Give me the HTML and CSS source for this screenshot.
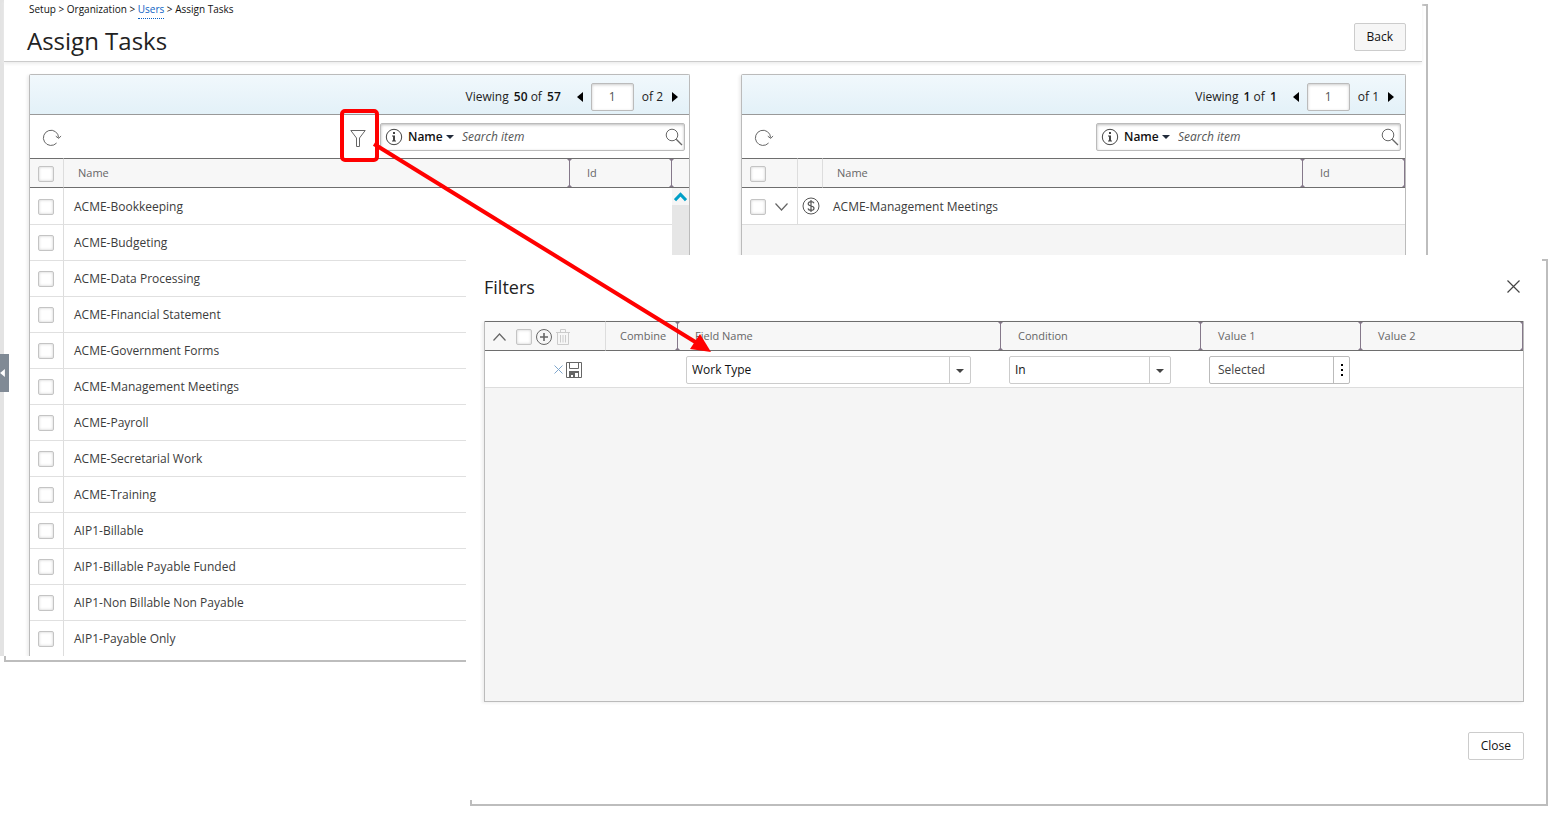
FILE: index.html
```
<!DOCTYPE html>
<html lang="en">
<head>
    <meta charset="UTF-8">
    <meta name="viewport" content="width=device-width, initial-scale=1.0">
    <title>Assign Tasks</title>
    <link rel="stylesheet" href="styles.css">
</head>
<body>
    <!-- Shared icons -->
    <svg class="sprite" aria-hidden="true">
        <symbol id="refresh" viewBox="0 0 20 18">
            <path d="M14.6 14A7.6 7.6 0 1 1 16.6 8.6M13.8 7.2l2.9 2.2 2.4-2.4" fill="none" stroke="currentColor"/>
        </symbol>
        <symbol id="info" viewBox="0 0 18 18">
            <circle cx="9" cy="9" r="7.7" fill="none" stroke="currentColor"/>
            <path d="M8 4h2v2H8zM7 7.5h3v5h1v1H7v-1h1v-4H7z" fill="currentColor"/>
        </symbol>
        <symbol id="search" viewBox="0 0 18 18">
            <circle cx="7" cy="7" r="5.8" fill="none" stroke="currentColor"/>
            <path d="M11.2 11.2L17 17" stroke="currentColor" stroke-width="1.3"/>
        </symbol>
        <symbol id="caret" viewBox="0 0 8 4">
            <path d="M0 0h8L4 4z" fill="currentColor"/>
        </symbol>
        <symbol id="prev" viewBox="0 0 6 10">
            <path d="M6 0v10L0 5z" fill="currentColor"/>
        </symbol>
        <symbol id="next" viewBox="0 0 6 10">
            <path d="M0 0v10l6-5z" fill="currentColor"/>
        </symbol>
    </svg>

    <div class="page">
        <main class="window assign">
            <button class="side-handle" aria-label="Expand menu"><svg width="5" height="8"><use href="#prev"/></svg></button>
            <header class="top">
                <div>
                    <nav class="breadcrumb">Setup &gt; Organization &gt; <a href="#">Users</a> &gt; Assign Tasks</nav>
                    <h1>Assign Tasks</h1>
                </div>
                <button class="btn btn-back">Back</button>
            </header>

            <div class="panels">
                <section class="panel">
                    <div class="pager">
                        <span>Viewing <b>50</b> of <b>57</b></span>
                        <button class="icon-btn prev" aria-label="Previous page"><svg width="6" height="10"><use href="#prev"/></svg></button>
                        <input type="text" class="page-no" value="1" aria-label="Page">
                        <span>of 2</span>
                        <button class="icon-btn next" aria-label="Next page"><svg width="6" height="10"><use href="#next"/></svg></button>
                    </div>
                    <div class="toolbar">
                        <button class="icon-btn refresh" aria-label="Refresh"><svg width="20" height="18"><use href="#refresh"/></svg></button>
                        <button class="icon-btn filter" aria-label="Filters">
                            <svg width="16" height="17" viewBox="0 0 16 17"><path d="M.8.5h14.4L9.5 8v8.5h-3V8z" fill="none" stroke="currentColor"/></svg>
                        </button>
                        <div class="search">
                            <svg width="18" height="18"><use href="#info"/></svg>
                            <select aria-label="Search by"><option>Name</option></select>
                            <svg class="caret" width="8" height="4"><use href="#caret"/></svg>
                            <input type="text" placeholder="Search item" aria-label="Search item">
                            <button class="icon-btn" aria-label="Search"><svg width="18" height="18"><use href="#search"/></svg></button>
                        </div>
                    </div>
                    <table class="grid">
                        <colgroup><col class="col-check"><col><col class="col-id"><col class="col-scroll"></colgroup>
                        <thead>
                            <tr>
                                <th class="line check"><input type="checkbox" aria-label="Select all"></th>
                                <th class="sep">Name</th>
                                <th class="sep id">Id</th>
                                <th></th>
                            </tr>
                        </thead>
                        <tbody>
                            <tr>
                                <td class="line check"><input type="checkbox" id="t1"></td>
                                <td colspan="2"><label for="t1">ACME-Bookkeeping</label></td>
                                <td class="scroll" rowspan="13">
                                    <button class="scroll-up" aria-label="Scroll up"><svg width="13" height="10" viewBox="0 0 13 10"><path d="M1 8.2L6.5 2.5 12 8.2" fill="none" stroke="#009fc7" stroke-width="3"/></svg></button>
                                </td>
                            </tr>
                            <tr><td class="line check"><input type="checkbox" id="t2"></td><td colspan="2"><label for="t2">ACME-Budgeting</label></td></tr>
                            <tr><td class="line check"><input type="checkbox" id="t3"></td><td colspan="2"><label for="t3">ACME-Data Processing</label></td></tr>
                            <tr><td class="line check"><input type="checkbox" id="t4"></td><td colspan="2"><label for="t4">ACME-Financial Statement</label></td></tr>
                            <tr><td class="line check"><input type="checkbox" id="t5"></td><td colspan="2"><label for="t5">ACME-Government Forms</label></td></tr>
                            <tr><td class="line check"><input type="checkbox" id="t6"></td><td colspan="2"><label for="t6">ACME-Management Meetings</label></td></tr>
                            <tr><td class="line check"><input type="checkbox" id="t7"></td><td colspan="2"><label for="t7">ACME-Payroll</label></td></tr>
                            <tr><td class="line check"><input type="checkbox" id="t8"></td><td colspan="2"><label for="t8">ACME-Secretarial Work</label></td></tr>
                            <tr><td class="line check"><input type="checkbox" id="t9"></td><td colspan="2"><label for="t9">ACME-Training</label></td></tr>
                            <tr><td class="line check"><input type="checkbox" id="t10"></td><td colspan="2"><label for="t10">AIP1-Billable</label></td></tr>
                            <tr><td class="line check"><input type="checkbox" id="t11"></td><td colspan="2"><label for="t11">AIP1-Billable Payable Funded</label></td></tr>
                            <tr><td class="line check"><input type="checkbox" id="t12"></td><td colspan="2"><label for="t12">AIP1-Non Billable Non Payable</label></td></tr>
                            <tr><td class="line check"><input type="checkbox" id="t13"></td><td colspan="2"><label for="t13">AIP1-Payable Only</label></td></tr>
                        </tbody>
                    </table>
                </section>

                <section class="panel">
                    <div class="pager">
                        <span>Viewing <b>1</b> of <b>1</b></span>
                        <button class="icon-btn prev" aria-label="Previous page"><svg width="6" height="10"><use href="#prev"/></svg></button>
                        <input type="text" class="page-no" value="1" aria-label="Page">
                        <span>of 1</span>
                        <button class="icon-btn next" aria-label="Next page"><svg width="6" height="10"><use href="#next"/></svg></button>
                    </div>
                    <div class="toolbar">
                        <button class="icon-btn refresh" aria-label="Refresh"><svg width="20" height="18"><use href="#refresh"/></svg></button>
                        <div class="search">
                            <svg width="18" height="18"><use href="#info"/></svg>
                            <select aria-label="Search by"><option>Name</option></select>
                            <svg class="caret" width="8" height="4"><use href="#caret"/></svg>
                            <input type="text" placeholder="Search item" aria-label="Search item">
                            <button class="icon-btn" aria-label="Search"><svg width="18" height="18"><use href="#search"/></svg></button>
                        </div>
                    </div>
                    <table class="grid">
                        <colgroup><col class="col-toggle"><col class="col-type"><col><col class="col-id"></colgroup>
                        <thead>
                            <tr>
                                <th class="line check"><input type="checkbox" aria-label="Select all"></th>
                                <th class="line"></th>
                                <th class="sep">Name</th>
                                <th class="sep id">Id</th>
                            </tr>
                        </thead>
                        <tbody>
                            <tr>
                                <td class="line check">
                                    <div class="tools">
                                        <input type="checkbox" id="a1">
                                        <button class="icon-btn" aria-label="Expand"><svg width="13" height="8" viewBox="0 0 13 8"><path d="M.5.5l6 6.500 6-6.500" fill="none" stroke="currentColor" stroke-width="1.2"/></svg></button>
                                    </div>
                                </td>
                                <td class="type">
                                    <svg width="18" height="18" viewBox="0 0 18 18" fill="none" stroke="currentColor">
                                        <circle cx="9" cy="9" r="8"/>
                                        <path d="M9 3v12M12 6.2C11.500 5 10.500 4.700 9 4.700 7.300 4.700 6.200 5.500 6.200 6.800 6.200 10 12 8 12 11.200 12 12.600 10.800 13.300 9 13.300 7.300 13.300 6.300 12.700 6 11.500" stroke-width="1.2"/>
                                    </svg>
                                </td>
                                <td colspan="2"><label for="a1">ACME-Management Meetings</label></td>
                            </tr>
                        </tbody>
                    </table>
                    <div class="empty"></div>
                </section>
            </div>
        </main>

        <div class="window dialog" role="dialog" aria-labelledby="filters-title">
            <div class="dialog-head">
                <h2 id="filters-title">Filters</h2>
                <button class="icon-btn" aria-label="Close filters"><svg width="13" height="13" viewBox="0 0 13 13"><path d="M.5.5l12 12M12.500.5l-12 12" stroke="#444" stroke-width="1.2"/></svg></button>
            </div>
            <div class="panel filters">
                <table class="grid">
                    <colgroup><col class="col-tools"><col class="col-combine"><col><col class="col-condition"><col class="col-value1"><col class="col-value2"></colgroup>
                    <thead>
                        <tr>
                            <th class="line check">
                                <div class="tools head-tools">
                                    <button class="icon-btn fold" aria-label="Collapse"><svg width="13" height="8" viewBox="0 0 13 8"><path d="M.5 7.500l6-6.500 6 6.500" fill="none" stroke="currentColor" stroke-width="1.2"/></svg></button>
                                    <input type="checkbox" aria-label="Select all filters">
                                    <button class="icon-btn" aria-label="Add filter"><svg width="16" height="16" viewBox="0 0 16 16"><circle cx="8" cy="8" r="7.500" fill="none" stroke="currentColor"/><path d="M4 8h8M8 4v8" stroke="currentColor" stroke-width="1.600"/></svg></button>
                                    <button class="icon-btn trash" aria-label="Delete filter"><svg width="14" height="16" viewBox="0 0 14 16" fill="none" stroke="currentColor"><path d="M0 3.500h14M4.500 3.500v-3h5v3M1.500 3.500v12h11v-12M4.500 6v7.500M7 6v7.500M9.500 6v7.500"/></svg></button>
                                </div>
                            </th>
                            <th class="sep">Combine</th>
                            <th class="sep id">Field Name</th>
                            <th class="sep id">Condition</th>
                            <th class="sep id">Value 1</th>
                            <th class="sep id">Value 2</th>
                        </tr>
                    </thead>
                    <tbody>
                        <tr>
                            <td class="check">
                                <div class="tools row-tools">
                                    <button class="icon-btn cancel" aria-label="Cancel"><svg width="9" height="9" viewBox="0 0 9 9"><path d="M.5.5l8 8M8.500.5l-8 8" stroke="currentColor"/></svg></button>
                                    <button class="icon-btn" aria-label="Save"><svg width="16" height="16" viewBox="0 0 16 16"><path d="M.5.5h15v15H.5zM3.500.5v6h9v-6M3.500 15.500v-6h9v6" fill="none" stroke="currentColor"/><path d="M3 9h10v2H9v5H7v-3H5v3H3z" fill="currentColor"/></svg></button>
                                </div>
                            </td>
                            <td></td>
                            <td class="field"><div class="combo"><select aria-label="Field Name"><option>Work Type</option></select><svg width="8" height="4"><use href="#caret"/></svg></div></td>
                            <td class="field"><div class="combo"><select aria-label="Condition"><option>In</option></select><svg width="8" height="4"><use href="#caret"/></svg></div></td>
                            <td class="field value">
                                <div class="picker">
                                    <input type="text" value="Selected" aria-label="Value 1">
                                    <button aria-label="Choose values"><svg width="2" height="12" viewBox="0 0 2 12"><path d="M0 0h2v2H0zM0 5h2v2H0zM0 10h2v2H0z"/></svg></button>
                                </div>
                            </td>
                            <td></td>
                        </tr>
                    </tbody>
                </table>
                <div class="empty"></div>
            </div>
            <div class="dialog-foot">
                <button class="btn">Close</button>
            </div>
        </div>

        <!-- Callout from the filter button to the dialog -->
        <svg class="callout" width="720" height="360" fill="none" stroke="#f00" aria-hidden="true">
            <rect x="342" y="111" width="35" height="49" rx="3" stroke-width="4"/>
            <path d="M374 144L697 343" stroke-width="4"/>
            <path d="M711 352l-21-3 10-15z" fill="#f00" stroke="none"/>
        </svg>
    </div>
</body>
</html>
```
FILE: styles.css
```
* {
    box-sizing: border-box;
}
body {
    margin: 0;
    background: #fff;
    color: #222;
    font-family: "Open Sans", sans-serif;
    font-size: 12px;
    line-height: 16px;
}
input, select, button {
    font: inherit;
    color: inherit;
    margin: 0;
}
svg {
    display: block;
    flex: none;
}
h1, h2 {
    margin: 0;
    font-weight: 400;
}
.sprite {
    position: absolute;
    width: 0;
    height: 0;
}
.page {
    position: relative;
    min-height: 100vh;
}

/* Windows with an offset frame behind them */
.window {
    position: relative;
    z-index: 0;
}
.window::before {
    content: "";
    position: absolute;
    z-index: -2;
    inset: 4px -6px -6px 4px;
    border: 2px solid #bdbdbd;
}
.window::after {
    content: "";
    position: absolute;
    z-index: -1;
    inset: 0;
    background: #fff;
}
.assign {
    margin-right: 137px;
    border-left: 4px solid #e3e3e3;
}
.assign::before {
    left: 0;
}
.side-handle {
    position: absolute;
    left: -4px;
    top: 354px;
    width: 9px;
    height: 38px;
    padding: 0;
    border: 0;
    background: #808a95;
    color: #fff;
}
.top {
    display: flex;
    justify-content: space-between;
    align-items: flex-start;
    height: 62px;
    padding: 1px 16px 0 23px;
    border-bottom: 1px solid #ccc;
    box-shadow: 0 2px 3px #eee;
}
.breadcrumb {
    padding-left: 2px;
    font-size: 10px;
    color: #111;
}
.breadcrumb a {
    display: inline-block;
    color: #0b62c4;
    text-decoration: none;
    border-bottom: 1px dotted #0b62c4;
    height: 18px;
}
h1 {
    font-size: 24px;
    line-height: 44px;
}
.btn {
    height: 28px;
    padding: 0 12px;
    border: 1px solid #ccc;
    border-radius: 2px;
    background: #fff;
    color: #111;
}
.btn-back {
    margin-top: 22px;
    background: #f6f6f6;
}
.icon-btn {
    display: flex;
    padding: 0;
    border: 0;
    background: none;
    color: #666;
}

/* Panels */
.panels {
    display: grid;
    grid-template-columns: 661fr 665fr;
    gap: 51px;
    padding: 12px 16px 0 25px;
    overflow: hidden;
}
.panel {
    display: flex;
    flex-direction: column;
    min-width: 0;
    border: 1px solid #bbb;
    border-bottom: 0;
    border-radius: 2px 2px 0 0;
    box-shadow: -2px 1px 3px #eee;
}
.pager {
    display: flex;
    align-items: center;
    justify-content: flex-end;
    height: 40px;
    padding: 4px 11px 0 0;
    border-bottom: 1px solid #999;
    background: linear-gradient(#f1f8fc, #e3f1f8);
}
.pager b {
    margin-left: 2px;
    font-weight: 600;
    color: #111;
}
.pager .icon-btn {
    color: #000;
}
.prev {
    margin: 0 8px 0 16px;
}
.next {
    margin-left: 9px;
}
.page-no {
    width: 43px;
    height: 28px;
    margin-right: 8px;
    padding: 0;
    border: 1px solid #bbb;
    border-radius: 2px;
    box-shadow: inset 0 1px 3px #ccc;
    text-align: center;
    color: #555;
}
.toolbar {
    display: flex;
    align-items: center;
    height: 43px;
    padding-right: 4px;
}
.refresh {
    margin: 3px auto 0 12px;
}
.filter {
    margin: 3px 14px 0 0;
}
.search {
    display: flex;
    align-items: center;
    width: 305px;
    height: 28px;
    padding: 0 1px 0 4px;
    border: 1px solid #bbb;
    border-radius: 2px;
    box-shadow: inset 0 1px 3px #bbb;
    color: #444;
}
.search select {
    appearance: none;
    width: 35px;
    margin-left: 5px;
    padding: 0;
    border: 0;
    background: none;
    font-weight: 600;
    color: #111;
}
.caret {
    margin: 0 8px 0 3px;
    color: #222b3a;
}
.search input {
    flex: 1;
    min-width: 0;
    padding: 0;
    border: 0;
    background: none;
}
.search input::placeholder {
    color: #555;
    font-style: italic;
}

/* Grids */
.grid {
    width: 100%;
    table-layout: fixed;
    border-spacing: 0;
    color: #3c3c3c;
}
.col-check { width: 34px; }
.col-id { width: 102px; }
.col-scroll { width: 17px; }
.col-toggle { width: 56px; }
.col-type { width: 25px; }
.col-tools { width: 121px; }
.col-combine { width: 72px; }
.col-condition { width: 200px; }
.col-value1 { width: 160px; }
.col-value2 { width: 162px; }

th {
    position: relative;
    height: 30px;
    padding: 0 0 0 14px;
    border-top: 1px solid #6e6e6e;
    border-bottom: 1px solid #6e6e6e;
    background: #f7f7f7;
    color: #666;
    font-size: 11px;
    font-weight: 400;
    text-align: left;
}
th.id {
    padding-left: 17px;
}
td {
    height: 36px;
    padding: 1px 0 0 10px;
}
tr + tr td {
    border-top: 1px solid #e0e0e0;
}
.line {
    border-right: 1px solid #ddd;
}
/* column resize marker */
.sep::after {
    content: "";
    position: absolute;
    z-index: 1;
    right: -2px;
    top: 0;
    width: 5px;
    height: 100%;
    background: #85788a;
    clip-path: polygon(0 0, 100% 0, 3px 2px, 3px calc(100% - 2px), 100% 100%, 0 100%, 2px calc(100% - 2px), 2px 2px);
}
.sep:last-child::after {
    right: 0;
    width: 3px;
    clip-path: polygon(0 0, 100% 0, 100% 100%, 0 100%, 2px calc(100% - 2px), 2px 2px);
}
th.check, td.check {
    padding: 1px 0 0 8px;
}
input[type="checkbox"] {
    appearance: none;
    display: block;
    width: 16px;
    height: 16px;
    border: 1px solid #c4c4c4;
    border-radius: 2px;
    background: #fff;
    box-shadow: inset 0 0 3px #ccc;
}
.tools {
    display: flex;
    align-items: center;
    gap: 9px;
}
.head-tools {
    gap: 4px;
}
.fold {
    margin-right: 6px;
}
.trash {
    color: #ccc;
}
.row-tools {
    justify-content: flex-end;
    gap: 3px;
    padding-right: 24px;
}
.cancel {
    color: #7fa6cc;
}
td.type {
    padding: 0 0 0 4px;
    color: #555;
}
td.scroll {
    padding: 0;
    background: #e6e6e6;
    vertical-align: top;
}
.scroll-up {
    display: flex;
    justify-content: center;
    width: 17px;
    height: 17px;
    padding: 4px 0 0;
    border: 0;
    background: #f5f5f5;
}
.empty {
    flex: 1;
    border-top: 1px solid #ddd;
    background: #f5f5f5;
}

/* Filters dialog */
.dialog {
    position: absolute;
    inset: 255px 17px 17px 466px;
    display: flex;
    flex-direction: column;
    padding: 0 18px;
}
.dialog-head {
    display: flex;
    justify-content: space-between;
    align-items: center;
    height: 66px;
    padding: 0 4px 3px 0;
}
h2 {
    font-size: 18px;
    line-height: 24px;
}
.filters {
    flex: 1;
    border-top: 0;
    border-bottom: 1px solid #bbb;
    border-radius: 0;
}
td.field {
    padding: 1px 30px 0 8px;
}
td.value {
    padding-right: 11px;
}
.combo {
    position: relative;
    color: #111;
}
.combo select {
    appearance: none;
    display: block;
    width: 100%;
    height: 28px;
    padding: 0 24px 0 5px;
    border: 1px solid #ccc;
    border-radius: 2px;
    background: linear-gradient(#ccc, #ccc) right 20px top / 1px 100% no-repeat #fff;
}
.combo svg {
    position: absolute;
    right: 7px;
    top: 13px;
    color: #444;
}
.picker {
    display: flex;
    height: 28px;
    border: 1px solid #bbb;
    border-radius: 2px;
    background: #fff;
}
.picker input {
    flex: 1;
    min-width: 0;
    padding: 0 0 0 8px;
    border: 0;
    background: none;
    color: #444;
}
.picker button {
    display: flex;
    align-items: center;
    justify-content: center;
    width: 16px;
    padding: 0;
    border: 0;
    border-left: 1px solid #bbb;
    background: none;
}
.dialog-foot {
    display: flex;
    justify-content: flex-end;
    padding: 30px 0 40px;
}
.callout {
    position: absolute;
    left: 0;
    top: 0;
    pointer-events: none;
}
```
